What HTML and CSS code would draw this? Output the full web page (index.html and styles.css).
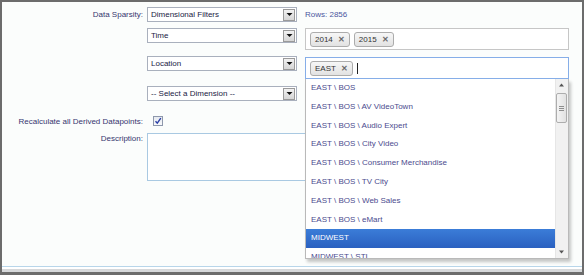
FILE: index.html
```html
<!DOCTYPE html>
<html>
<head>
<meta charset="utf-8">
<link rel="stylesheet" href="styles.css">
</head>
<body>
<div class="frame">
  <div class="row r1">
    <div class="label">Data Sparsity:</div>
    <div class="select"><span class="val">Dimensional Filters</span><span class="btn"><svg width="7" height="5" viewBox="0 0 7 5"><path d="M0.5 1h6L3.5 4z" fill="#111"/></svg></span></div>
    <div class="rows">Rows: 2856</div>
  </div>
  <div class="row r2">
    <div class="label"></div>
    <div class="select"><span class="val">Time</span><span class="btn"><svg width="7" height="5" viewBox="0 0 7 5"><path d="M0.5 1h6L3.5 4z" fill="#111"/></svg></span></div>
    <div class="tagbox">
      <span class="tag">2014<span class="x">✕</span></span>
      <span class="tag">2015<span class="x">✕</span></span>
    </div>
  </div>
  <div class="row r3">
    <div class="label"></div>
    <div class="select"><span class="val">Location</span><span class="btn"><svg width="7" height="5" viewBox="0 0 7 5"><path d="M0.5 1h6L3.5 4z" fill="#111"/></svg></span></div>
    <div class="tagbox focus">
      <span class="tag">EAST<span class="x">✕</span></span>
      <span class="caret"></span>
      <div class="dropdown">
        <ul class="items">
          <li>EAST \ BOS</li>
          <li>EAST \ BOS \ AV VideoTown</li>
          <li>EAST \ BOS \ Audio Expert</li>
          <li>EAST \ BOS \ City Video</li>
          <li>EAST \ BOS \ Consumer Merchandise</li>
          <li>EAST \ BOS \ TV City</li>
          <li>EAST \ BOS \ Web Sales</li>
          <li>EAST \ BOS \ eMart</li>
          <li class="active">MIDWEST</li>
          <li>MIDWEST \ STL</li>
        </ul>
        <div class="scrollbar">
          <svg class="arr up" width="7" height="4" viewBox="0 0 7 4"><path d="M1 3.5h5L3.5 0.5z" fill="#555"/></svg>
          <div class="thumb"><span></span><span></span><span></span></div>
          <svg class="arr down" width="7" height="4" viewBox="0 0 7 4"><path d="M1 0.5h5L3.5 3.5z" fill="#555"/></svg>
        </div>
      </div>
    </div>
  </div>
  <div class="row r4">
    <div class="label"></div>
    <div class="select"><span class="val">-- Select a Dimension --</span><span class="btn"><svg width="7" height="5" viewBox="0 0 7 5"><path d="M0.5 1h6L3.5 4z" fill="#111"/></svg></span></div>
  </div>
  <div class="row r5">
    <div class="label">Recalculate all Derived Datapoints:</div>
    <div class="checkcell"><span class="check"><svg width="8" height="8" viewBox="0 0 8 8"><path d="M1.5 4.2l1.8 2L6.8 1.2" fill="none" stroke="#2b3fa6" stroke-width="1.4"/></svg></span></div>
  </div>
  <div class="row r6">
    <div class="label">Description:</div>
    <div class="textarea"></div>
  </div>
  <div class="foot"></div>
</div>
</body>
</html>
```

FILE: styles.css
```css
html, body {
  margin: 0;
  padding: 0;
  background: #ffffff;
}
body {
  font-family: "Liberation Sans", Arial, sans-serif;
  font-size: 8px;
  color: #3a3a78;
}
.frame {
  box-sizing: border-box;
  width: 584px;
  height: 275px;
  border: 2px solid #6c6c6c;
  border-bottom-width: 3px;
  background: #fbfdfc;
  display: flex;
  flex-direction: column;
}
.row {
  display: grid;
  grid-template-columns: 145px 158px 264px;
  align-items: start;
}
.label {
  text-align: right;
  padding-right: 4px;
  color: #36366f;
  line-height: 15px;
}
.r1 { margin-top: 5px; }
.r2 { margin-top: 6px; }
.r3 { margin-top: 6px; }
.r4 { margin-top: 7px; }
.r5 { margin-top: 15px; }
.r6 { margin-top: 6px; }
.r5 .label { line-height: 11px; }
.r6 .label { line-height: 12px; }

.select {
  box-sizing: border-box;
  width: 150px;
  height: 15px;
  border: 1px solid #a9b0bd;
  background: #ffffff;
  display: flex;
  align-items: center;
  justify-content: space-between;
  color: #222244;
}
.select .val {
  padding-left: 3px;
}
.select .btn {
  box-sizing: border-box;
  width: 12px;
  height: 12px;
  margin-right: 1px;
  border: 1px solid #9a9a9a;
  background: linear-gradient(#f2f2f2, #d6d6d6);
  display: flex;
  align-items: center;
  justify-content: center;
}
.rows {
  line-height: 15px;
  color: #4a56a0;
}
.tagbox {
  box-sizing: border-box;
  height: 22px;
  border: 1px solid #c6c6c6;
  background: #ffffff;
  display: flex;
  align-items: center;
  padding-left: 4px;
  gap: 4px;
  position: relative;
}
.tagbox.focus {
  margin-top: 1px;
  border-color: #86aee8;
}
.tag {
  box-sizing: border-box;
  height: 15px;
  border: 1px solid #acacac;
  border-radius: 3px;
  background: linear-gradient(#f7f7f7, #e2e2e2);
  color: #333333;
  display: inline-flex;
  align-items: center;
  padding: 0 4px 0 4px;
}
.tag .x {
  margin-left: 5px;
  font-size: 8px;
  font-weight: bold;
  color: #6a6a6a;
}
.caret {
  width: 1px;
  height: 11px;
  background: #222;
  margin-left: 0;
}
.dropdown {
  position: absolute;
  left: -1px;
  top: 21px;
  width: 264px;
  height: 180px;
  box-sizing: border-box;
  border: 1px solid #b9b9b9;
  border-top: none;
  background: #ffffff;
  box-shadow: 2px 3px 3px rgba(0, 0, 0, 0.22);
  overflow: hidden;
  z-index: 5;
}
.items {
  list-style: none;
  margin: 0;
  padding: 0;
  margin-right: 13px;
}
.items li {
  height: 18.8px;
  line-height: 18.8px;
  padding-left: 5px;
  color: #4b4b8e;
  white-space: nowrap;
}
.items li.active {
  background: linear-gradient(#3b7dd8, #2a60c0);
  color: #ffffff;
}
.scrollbar {
  position: absolute;
  right: 0;
  top: 0;
  bottom: 0;
  width: 13px;
  background: #f1f1f1;
  border-left: 1px solid #e6e6e6;
  box-sizing: border-box;
}
.arr {
  position: absolute;
  left: 2px;
}
.arr.up { top: 4px; }
.arr.down { bottom: 4px; }
.thumb {
  position: absolute;
  left: 0;
  top: 14px;
  width: 11px;
  height: 30px;
  box-sizing: border-box;
  border: 1px solid #adadad;
  border-radius: 2px;
  background: linear-gradient(90deg, #f4f4f4, #e2e2e2);
  display: flex;
  flex-direction: column;
  align-items: center;
  justify-content: center;
  gap: 1px;
}
.thumb span {
  width: 5px;
  height: 1px;
  background: #8e8e8e;
}
.checkcell {
  padding-left: 6px;
}
.check {
  box-sizing: border-box;
  width: 10px;
  height: 10px;
  border: 1px solid #8e98ac;
  background: linear-gradient(#e6eaf0, #f8f9fb);
  display: flex;
  align-items: center;
  justify-content: center;
  margin-top: 0;
}
.textarea {
  grid-column: 2 / 4;
  box-sizing: border-box;
  width: 422px;
  height: 48px;
  border: 1px solid #a9c9e2;
  background: #ffffff;
}
.foot {
  margin-top: auto;
  height: 2px;
  border-top: 1px solid #b8d6ea;
  border-bottom: 3px solid #d6d8da;
  background: #ffffff;
}
```
